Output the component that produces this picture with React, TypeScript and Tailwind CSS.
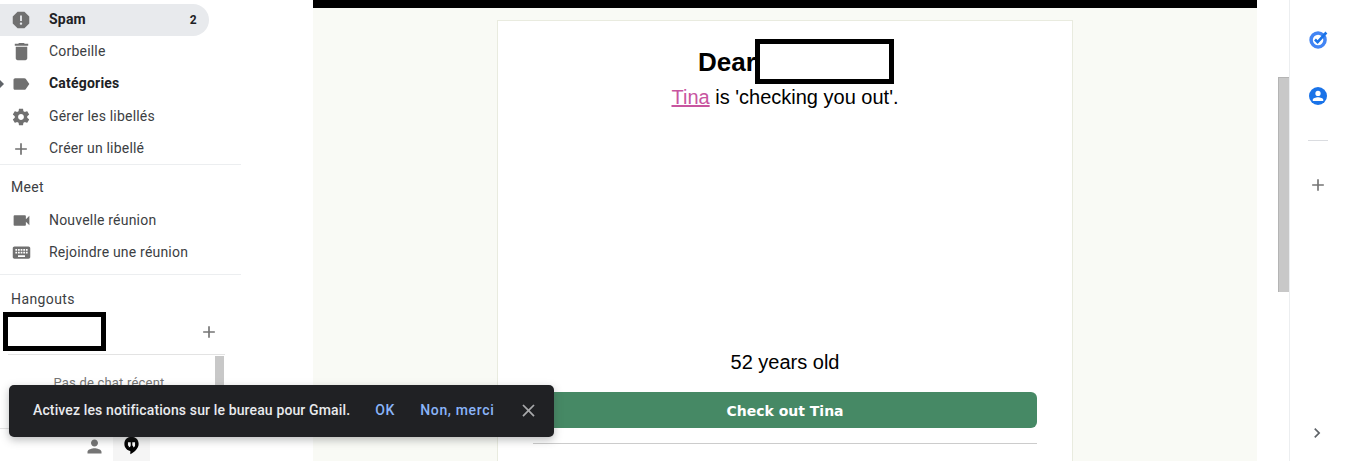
import React from 'react';

const icons = {
  spam: 'M15.73 3H8.27L3 8.27v7.46L8.27 21h7.46L21 15.73V8.27L15.73 3zM12 17.3c-.72 0-1.3-.58-1.3-1.3 0-.72.58-1.3 1.3-1.3.72 0 1.3.58 1.3 1.3 0 .72-.58 1.3-1.3 1.3zm1-4.3h-2V7h2v6z',
  trash: 'M6 19c0 1.1.9 2 2 2h8c1.1 0 2-.9 2-2V7H6v12zM19 4h-3.5l-1-1h-5l-1 1H5v2h14V4z',
  label: 'M17.63 5.84C17.27 5.33 16.67 5 16 5L5 5.01C3.9 5.01 3 5.9 3 7v10c0 1.1.9 1.99 2 1.99L16 19c.67 0 1.27-.33 1.63-.84L22 12l-4.37-6.16z',
  gear: 'M19.43 12.98c.04-.32.07-.64.07-.98s-.03-.66-.07-.98l2.11-1.65c.19-.15.24-.42.12-.64l-2-3.46c-.12-.22-.39-.3-.61-.22l-2.49 1c-.52-.4-1.08-.73-1.69-.98l-.38-2.65C14.46 2.18 14.25 2 14 2h-4c-.25 0-.46.18-.49.42l-.38 2.65c-.61.25-1.17.59-1.69.98l-2.49-1c-.23-.09-.49 0-.61.22l-2 3.46c-.13.22-.07.49.12.64l2.11 1.65c-.04.32-.07.65-.07.98s.03.66.07.98l-2.11 1.65c-.19.15-.24.42-.12.64l2 3.46c.12.22.39.3.61.22l2.49-1c.52.4 1.08.73 1.69.98l.38 2.65c.03.24.24.42.49.42h4c.25 0 .46-.18.49-.42l.38-2.65c.61-.25 1.17-.59 1.69-.98l2.49 1c.23.09.49 0 .61-.22l2-3.46c.12-.22.07-.49-.12-.64l-2.11-1.65zM12 15.5c-1.93 0-3.5-1.57-3.5-3.5s1.57-3.5 3.5-3.5 3.5 1.57 3.5 3.5-1.57 3.5-3.5 3.5z',
  plus: 'M19 13h-6v6h-2v-6H5v-2h6V5h2v6h6v2z',
  video: 'M17 10.5V7c0-.55-.45-1-1-1H4c-.55 0-1 .45-1 1v10c0 .55.45 1 1 1h12c.55 0 1-.45 1-1v-3.5l4 4v-11l-4 4z',
  keyboard: 'M20 5H4c-1.1 0-1.99.9-1.99 2L2 17c0 1.1.9 2 2 2h16c1.1 0 2-.9 2-2V7c0-1.1-.9-2-2-2zm-9 3h2v2h-2V8zm0 3h2v2h-2v-2zM8 8h2v2H8V8zm0 3h2v2H8v-2zm-1 2H5v-2h2v2zm0-3H5V8h2v2zm9 7H8v-2h8v2zm0-4h-2v-2h2v2zm0-3h-2V8h2v2zm3 3h-2v-2h2v2zm0-3h-2V8h2v2z',
  person: 'M12 12c2.21 0 4-1.79 4-4s-1.79-4-4-4-4 1.79-4 4 1.79 4 4 4zm0 2c-2.67 0-8 1.34-8 4v2h16v-2c0-2.66-5.33-4-8-4z',
  close: 'M19 6.41L17.59 5 12 10.59 6.41 5 5 6.41 10.59 12 5 17.59 6.41 19 12 13.41 17.59 19 19 17.59 13.41 12z',
  chevron: 'M10 6L8.59 7.41 13.17 12l-4.58 4.59L10 18l6-6z',
};

function Icon({ d, className }: { d: string; className?: string }) {
  return (
    <svg viewBox="0 0 24 24" className={className} fill="currentColor">
      <path d={d} />
    </svg>
  );
}

function NavRow({ icon, label, bold, count, active, arrow, size = 'h-5 w-5', low }: {
  icon: string;
  label: string;
  bold?: boolean;
  count?: string;
  active?: boolean;
  arrow?: boolean;
  size?: string;
  low?: boolean;
}) {
  return (
    <div className={`relative flex h-8 w-[209px] items-center rounded-r-full pl-[11px] pr-[12px] ${active ? 'bg-[#e8eaed]' : ''} ${low ? 'pt-[2px]' : ''}`}>
      {arrow && <span className="absolute left-0 top-[12px] h-0 w-0 border-y-[4px] border-l-[4px] border-y-transparent border-l-[#5f6368]" />}
      <span className="flex w-5 shrink-0 justify-center">
        <Icon d={icon} className={`${size} shrink-0 text-[#707070]`} />
      </span>
      <span className={`ml-[18px] text-[14px] tracking-[0.2px] ${bold ? 'font-bold text-[#202124]' : 'text-[#3c4043]'}`}>{label}</span>
      {count && <span className="ml-auto text-[12px] font-bold tracking-[0.3px] text-[#202124]">{count}</span>}
    </div>
  );
}

function Sidebar() {
  return (
    <aside className="flex h-full w-[241px] shrink-0 flex-col bg-white pt-1 font-['Roboto',sans-serif]">
      <NavRow icon={icons.spam} label="Spam" bold count="2" active size="h-[22px] w-[22px]" />
      <NavRow icon={icons.trash} label="Corbeille" size="h-[23px] w-[23px]" />
      <NavRow icon={icons.label} label="Catégories" bold arrow />
      <NavRow icon={icons.gear} label="Gérer les libellés" low />
      <NavRow icon={icons.plus} label="Créer un libellé" low />
      <div className="h-px bg-[#eceef0]" />
      <div className="flex h-[40px] items-center pl-[11px] pt-[6px] text-[14px] tracking-[0.3px] text-[#3c4043]">Meet</div>
      <NavRow icon={icons.video} label="Nouvelle réunion" size="h-[21px] w-[21px]" />
      <NavRow icon={icons.keyboard} label="Rejoindre une réunion" size="h-[21px] w-[21px]" />
      <div className="mt-[6px] h-px bg-[#eceef0]" />
      <div className="flex h-[37px] items-center pl-[11px] pt-[12px] text-[14px] tracking-[0.4px] text-[#3c4043]">Hangouts</div>
      <div className="flex h-[39px] items-center pl-[3px]">
        <div className="h-[39px] w-[103px] border-[5px] border-black bg-white" />
        <Icon d={icons.plus} className="ml-[93px] h-5 w-5 text-[#757575]" />
      </div>
      <div className="ml-[8px] mt-[3px] flex h-[74px] w-[217px] border-t border-[#e3e3e3]">
        <div className="flex-1 pt-[18px] pr-[5px] text-center text-[13px] tracking-[0.2px] text-[#757575]">Pas de chat récent</div>
        <div className="mr-px mt-[1px] h-[60px] w-[9px] bg-[#c8c8c8]" />
      </div>
      <div className="flex h-[33px] border-t border-[#e3e3e3] pl-[76px]">
        <div className="flex h-full w-[37px] items-center justify-center">
          <Icon d={icons.person} className="mt-[2px] h-[21px] w-[21px] text-[#757575]" />
        </div>
        <div className="flex h-full w-[37px] items-center justify-center bg-[#f5f5f5]">
          <svg viewBox="0 0 24 24" className="mt-[1px] h-[19px] w-[19px]">
            <path d="M12 1C6.600 1 3 4.900 3 10c0 5 3.900 8.400 7.500 8.900V23c4.500-2.300 10.500-7 10.500-13 0-5.100-3.600-9-9-9z" fill="#000" />
            <path d="M7.500 8h3.500v3.800c0 1.400-1 2.400-2.400 2.600v-2.100H7.500zM13 8h3.500v3.800c0 1.400-1 2.400-2.400 2.600v-2.100H13z" fill="#fff" />
          </svg>
        </div>
      </div>
    </aside>
  );
}

function Email() {
  return (
    <main className="flex h-full w-[944px] shrink-0 flex-col bg-[#f9faf5]">
      <div className="h-2 bg-black" />
      <div className="mx-auto mt-3 w-[576px] flex-1 border border-b-0 border-[#e9ebdf] bg-white pt-[18px] font-['Liberation_Sans',sans-serif] text-black">
        <div className="flex justify-center pl-[22px]">
          <span className="h-[45px] w-[57px] whitespace-nowrap text-[26px] font-bold leading-[47px]">Dear</span>
          <div className="h-[45px] w-[139px] border-[5px] border-black bg-white" />
        </div>
        <p className="mt-[2px] text-center text-[20px] leading-[23px]">
          <a className="text-[#c8559f] underline">Tina</a> is 'checking you out'.
        </p>
        <p className="mt-[242px] text-center text-[20px] leading-[23px]">52 years old</p>
        <div className="mx-[35px] mt-[18px] flex h-[36px] items-center justify-center rounded-[6px] bg-[#468965] pt-[2px] font-['DejaVu_Sans',sans-serif] text-[14px] font-bold text-white">Check out Tina</div>
        <div className="mx-[35px] mt-[15px] h-px bg-[#cccccc]" />
      </div>
    </main>
  );
}

function RightPanel() {
  return (
    <aside className="flex h-full w-[56px] shrink-0 flex-col items-center border-l border-[#eceef0] bg-white">
      <svg viewBox="0 0 24 24" className="mt-[29px] ml-[1px] h-[21px] w-[21px]" fill="none">
        <circle cx="11.500" cy="12.500" r="8" stroke="#4285f4" strokeWidth="4" />
        <path d="M8 12l3 3 10-11" stroke="#1a73e8" strokeWidth="3" />
      </svg>
      <svg viewBox="0 0 24 24" className="mt-[37px] ml-[1px] h-[18px] w-[18px]">
        <circle cx="12" cy="12" r="12" fill="#1a73e8" />
        <circle cx="12" cy="8.500" r="3.500" fill="#fff" />
        <path d="M5 18.500v-1.500c0-2.300 4-3.500 7-3.500s7 1.200 7 3.500v1.500z" fill="#fff" />
      </svg>
      <div className="mt-[35px] h-px w-[20px] bg-[#dadce0]" />
      <Icon d={icons.plus} className="mt-[34px] ml-[1px] h-5 w-5 text-[#757575]" />
      <Icon d={icons.chevron} className="mt-auto mb-[18px] ml-[-1px] h-5 w-5 text-[#5f6368]" />
    </aside>
  );
}

export default function App() {
  return (
    <div className="relative flex h-[461px] w-[1345px] overflow-hidden bg-white">
      <Sidebar />
      <div className="h-full w-[72px] shrink-0" />
      <Email />
      <div className="flex h-full w-[32px] shrink-0 justify-end pt-[77px]">
        <div className="h-[215px] w-[11px] border-l border-t border-[#b4b4b4] bg-[#c8c8c8]" />
      </div>
      <RightPanel />

      <div className="absolute left-[9px] top-[385px] flex h-[52px] w-[545px] items-center rounded-[5px] bg-[#202124] pb-px pl-[24px] font-['Roboto',sans-serif] text-[14px] shadow-[0_3px_8px_rgba(60,64,67,0.35)]">
        <span className="font-medium tracking-[0.13px] text-[#e8eaed]">Activez les notifications sur le bureau pour Gmail.</span>
        <span className="ml-[25px] font-medium tracking-[0.8px] text-[#8ab4f8]">OK</span>
        <span className="ml-[25px] font-medium tracking-[0.65px] text-[#8ab4f8]">Non, merci</span>
        <Icon d={icons.close} className="ml-[24px] h-[21px] w-[21px] text-[#a8a9ab]" />
      </div>
    </div>
  );
}
